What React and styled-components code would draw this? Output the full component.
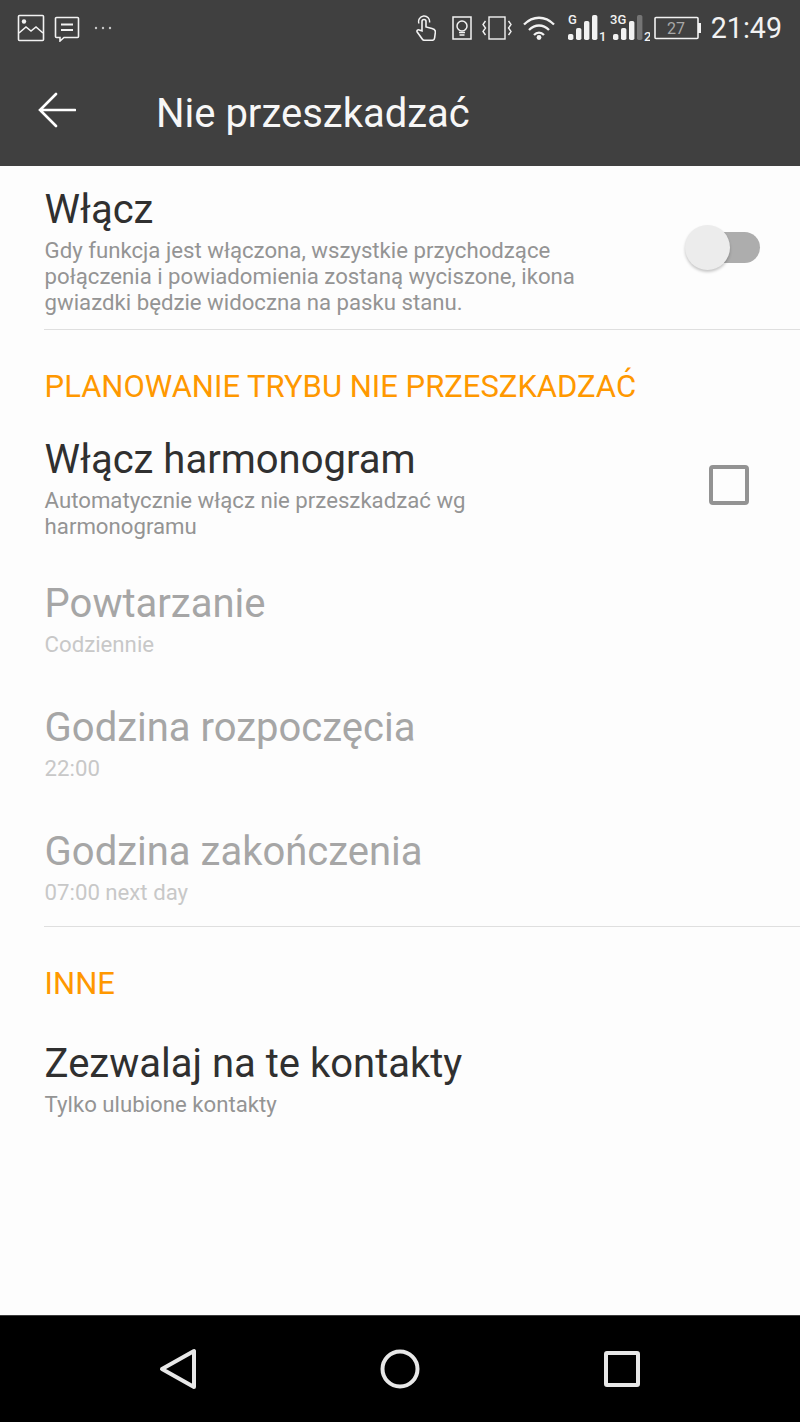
import React from "react";
import styled, { createGlobalStyle } from "styled-components";

const Global = createGlobalStyle`
  html, body { margin: 0; padding: 0; background: #fdfdfd; }
  body { font-family: Roboto, "Liberation Sans", sans-serif; }
`;

const Page = styled.div`
  width: 800px;
  height: 1422px;
  display: flex;
  flex-direction: column;
  overflow: hidden;
`;

const Top = styled.header`
  height: 166px;
  background: #404040;
  color: #f2f2f2;
  flex: none;
`;

const StatusBar = styled.div`
  height: 56px;
  display: flex;
  align-items: center;
  justify-content: space-between;
  padding: 0 18px 0 17px;
`;

const StatusGroup = styled.div`
  display: flex;
  align-items: center;
`;

const StatusIcon = styled.svg`
  flex: none;
  margin-right: ${(p) => p.$right || 0}px;
`;

const Clock = styled.span`
  font-size: 28.6px;
  line-height: 34px;
`;

const ActionBar = styled.div`
  height: 110px;
  display: flex;
  align-items: center;
`;

const BackButton = styled.div`
  width: 156px;
  padding-left: 38px;
  box-sizing: border-box;
  display: flex;
  margin-bottom: 2px;
`;

const PageTitle = styled.h1`
  margin: 4px 0 0;
  font-size: 40px;
  font-weight: 400;
  color: #f7f7f7;
`;

const Content = styled.main`
  flex: 1;
  background: #fdfdfd;
`;

const Row = styled.div`
  height: ${(p) => p.$height}px;
  padding: ${(p) => p.$top}px 0 0 44.6px;
  box-sizing: border-box;
  display: flex;
  justify-content: space-between;
`;

const RowText = styled.div`
  width: ${(p) => p.$width || 560}px;
`;

const RowTitle = styled.div`
  font-size: 40px;
  line-height: 44px;
  color: ${(p) => (p.$disabled ? "#a6a6a6" : "#303030")};
`;

const RowHint = styled.div`
  font-size: 22.2px;
  line-height: 26.2px;
  margin-top: ${(p) => p.$gap || 0}px;
  color: ${(p) => (p.$disabled ? "#c8c8c8" : "#949494")};
`;

const Divider = styled.hr`
  margin: 0 0 0 44px;
  border: 0;
  height: 1px;
  background: #dfdfdf;
`;

const Section = styled.div`
  height: 93px;
  padding: 39px 0 0 44.6px;
  box-sizing: border-box;
  font-size: 31px;
  line-height: 36px;
  color: #ff9800;
`;

const Switch = styled.div`
  position: relative;
  width: 75px;
  height: 31px;
  margin: 44px 40px 0 0;
  flex: none;
`;

const SwitchTrack = styled.div`
  position: absolute;
  left: 22px;
  top: 0;
  right: 0;
  height: 31px;
  border-radius: 16px;
  background: #adadad;
`;

const SwitchKnob = styled.div`
  position: absolute;
  left: 0;
  top: -7px;
  width: 45px;
  height: 45px;
  border-radius: 50%;
  background: #ececec;
  box-shadow: 0 2px 3px rgba(0, 0, 0, 0.22);
`;

const Checkbox = styled.div`
  width: 40px;
  height: 40px;
  box-sizing: border-box;
  border: 4.5px solid #939393;
  border-radius: 4px;
  margin: 27px 51px 0 0;
  flex: none;
`;

const NavBar = styled.nav`
  height: 107px;
  flex: none;
  background: #000;
  border-top: 1px solid #3c3c3c;
  box-sizing: border-box;
  display: flex;
  align-items: center;
  justify-content: space-between;
  padding: 0 160px 0 156px;
`;

const Signal = ({ label, sub, dim, barX, width, right }) => (
  <StatusIcon $right={right} width={width} height="36" viewBox={`0 0 ${width} 36`} fill="#f2f2f2">
    <text x="0" y="14" fontSize="13" fontFamily="Roboto" fontWeight="500">{label}</text>
    <rect x={barX} y="24" width="5.4" height="6" rx="1.8" />
    <rect x={barX + 8} y="18" width="5.4" height="12" rx="1.8" />
    <rect x={barX + 16} y="11" width="5.4" height="19" rx="1.8" />
    <rect x={barX + 24} y="5" width="5.4" height="25" rx="1.8" fill={dim ? "#757575" : "#f2f2f2"} />
    <text x={barX + 31} y="31" fontSize="13" fontFamily="Roboto" fontWeight="500">{sub}</text>
  </StatusIcon>
);

export default function App() {
  return (
    <Page>
      <Global />
      <Top>
        <StatusBar>
          <StatusGroup>
            <StatusIcon $right={9} width="28" height="28" viewBox="0 0 28 28" fill="none" stroke="#f2f2f2" strokeWidth="1.6">
              <rect x="1.5" y="1.5" width="25" height="25" rx="1" />
              <circle cx="7" cy="7.5" r="2.2" fill="#f2f2f2" stroke="none" />
              <path d="M2 19l7-6 5 4 5-4 7 6" />
            </StatusIcon>
            <StatusIcon $right={13} width="26" height="28" viewBox="0 0 26 28" fill="none" stroke="#f2f2f2" strokeWidth="1.6">
              <path d="M2.5 3.5h21a1 1 0 0 1 1 1v18a1 1 0 0 1-1 1H10l-4 3.5v-3.5H2.5a1 1 0 0 1-1-1v-18a1 1 0 0 1 1-1z" />
              <path d="M7 10.5h12M7 16h12" strokeWidth="2" />
            </StatusIcon>
            <StatusIcon width="22" height="6" viewBox="0 0 22 6" fill="#c8c8c8">
              <circle cx="3" cy="3" r="1.2" />
              <circle cx="10" cy="3" r="1.2" />
              <circle cx="17" cy="3" r="1.2" />
            </StatusIcon>
          </StatusGroup>
          <StatusGroup>
            <StatusIcon $right={16} width="20" height="26" viewBox="0 0 20 26" fill="none" stroke="#f2f2f2" strokeWidth="1.6">
              <path d="M3 8.500a5.500 5.500 0 1 1 10.500-1" strokeWidth="1.4" />
              <path d="M6 16V6.500a2 2 0 0 1 4 0V12l6 1.500c2 .5 3.600 1.500 3.400 3.500l-.8 6c-.2 1.500-1 2.300-2.500 2.300H8.500c-1 0-1.800-.4-2.300-1.300L1.200 17c-.8-1.400.8-2.800 2.200-1.900L6 16z" />
            </StatusIcon>
            <StatusIcon $right={10} width="20" height="24" viewBox="0 0 20 24" fill="none" stroke="#f2f2f2" strokeWidth="1.5">
              <rect x="1" y="1" width="18" height="22" />
              <circle cx="10" cy="10" r="5" />
              <path d="M7 16.500h6M7.500 19h5" />
            </StatusIcon>
            <StatusIcon $right={11} width="30" height="24" viewBox="0 0 30 24" fill="none" stroke="#f2f2f2" strokeWidth="1.4">
              <rect x="7" y="1" width="16" height="22" />
              <path d="M3.500 5L1 8.500 3.500 12 1 15.500 3.500 19M26.500 5L29 8.500 26.500 12 29 15.500 26.500 19" />
            </StatusIcon>
            <StatusIcon $right={13} width="32" height="24" viewBox="0 0 32 24" fill="none" stroke="#f2f2f2" strokeWidth="2.300">
              <path d="M1 8.500c9-9 21-9 30 0" />
              <path d="M6 14c6-6 14-6 20 0" />
              <path d="M11 19c3-3 7-3 10 0" />
              <circle cx="16" cy="21.500" r="2.400" fill="#f2f2f2" stroke="none" />
            </StatusIcon>
            <Signal label="G" sub="1" barX={0} width={37} right={5} />
            <Signal label="3G" sub="2" barX={3} width={40} right={4} dim />
            <StatusIcon $right={10} width="47" height="26" viewBox="0 0 47 26" fill="none" stroke="#f2f2f2">
              <rect x="1" y="2.500" width="43" height="21" strokeWidth="1.600" rx="1" />
              <rect x="44" y="8" width="3" height="10" fill="#f2f2f2" stroke="none" />
              <text x="13" y="19" fontSize="16" fontFamily="Roboto" fill="#a8a8a8" stroke="none">27</text>
            </StatusIcon>
            <Clock>21:49</Clock>
          </StatusGroup>
        </StatusBar>
        <ActionBar>
          <BackButton>
            <svg width="38" height="36" viewBox="0 0 38 36" fill="none" stroke="#fff" strokeWidth="2.600" strokeLinecap="round">
              <path d="M18 2L2 18l16 16M2 18h35" />
            </svg>
          </BackButton>
          <PageTitle>Nie przeszkadzać</PageTitle>
        </ActionBar>
      </Top>
      <Content>
        <Row $height={163} $top={22}>
          <RowText>
            <RowTitle>Włącz</RowTitle>
            <RowHint $gap={5}>
              Gdy funkcja jest włączona, wszystkie przychodzące połączenia i powiadomienia zostaną wyciszone, ikona gwiazdki będzie widoczna na pasku stanu.
            </RowHint>
          </RowText>
          <Switch>
            <SwitchTrack />
            <SwitchKnob />
          </Switch>
        </Row>
        <Divider />
        <Section>PLANOWANIE TRYBU NIE PRZESZKADZAĆ</Section>
        <Row $height={124} $top={15}>
          <RowText $width={470}>
            <RowTitle>Włącz harmonogram</RowTitle>
            <RowHint $gap={5}>Automatycznie włącz nie przeszkadzać wg harmonogramu</RowHint>
          </RowText>
          <Checkbox />
        </Row>
        <Row $height={124} $top={35}>
          <RowText>
            <RowTitle $disabled>Powtarzanie</RowTitle>
            <RowHint $disabled $gap={5}>Codziennie</RowHint>
          </RowText>
        </Row>
        <Row $height={124} $top={35}>
          <RowText>
            <RowTitle $disabled>Godzina rozpoczęcia</RowTitle>
            <RowHint $disabled $gap={5}>22:00</RowHint>
          </RowText>
        </Row>
        <Row $height={131} $top={35}>
          <RowText>
            <RowTitle $disabled>Godzina zakończenia</RowTitle>
            <RowHint $disabled $gap={5}>07:00 next day</RowHint>
          </RowText>
        </Row>
        <Divider />
        <Section>INNE</Section>
        <Row $height={124} $top={22}>
          <RowText>
            <RowTitle>Zezwalaj na te kontakty</RowTitle>
            <RowHint $gap={5}>Tylko ulubione kontakty</RowHint>
          </RowText>
        </Row>
      </Content>
      <NavBar>
        <svg width="40" height="42" viewBox="0 0 40 42" fill="none" stroke="#e8e8e8" strokeWidth="4" strokeLinejoin="round">
          <path d="M38 3v36L6 21z" />
        </svg>
        <svg width="40" height="40" viewBox="0 0 40 40" fill="none" stroke="#e8e8e8" strokeWidth="4">
          <circle cx="20" cy="20" r="17.500" />
        </svg>
        <svg width="36" height="36" viewBox="0 0 36 36" fill="none" stroke="#e8e8e8" strokeWidth="4" strokeLinejoin="round">
          <rect x="2" y="2" width="32" height="32" rx="1" />
        </svg>
      </NavBar>
    </Page>
  );
}
